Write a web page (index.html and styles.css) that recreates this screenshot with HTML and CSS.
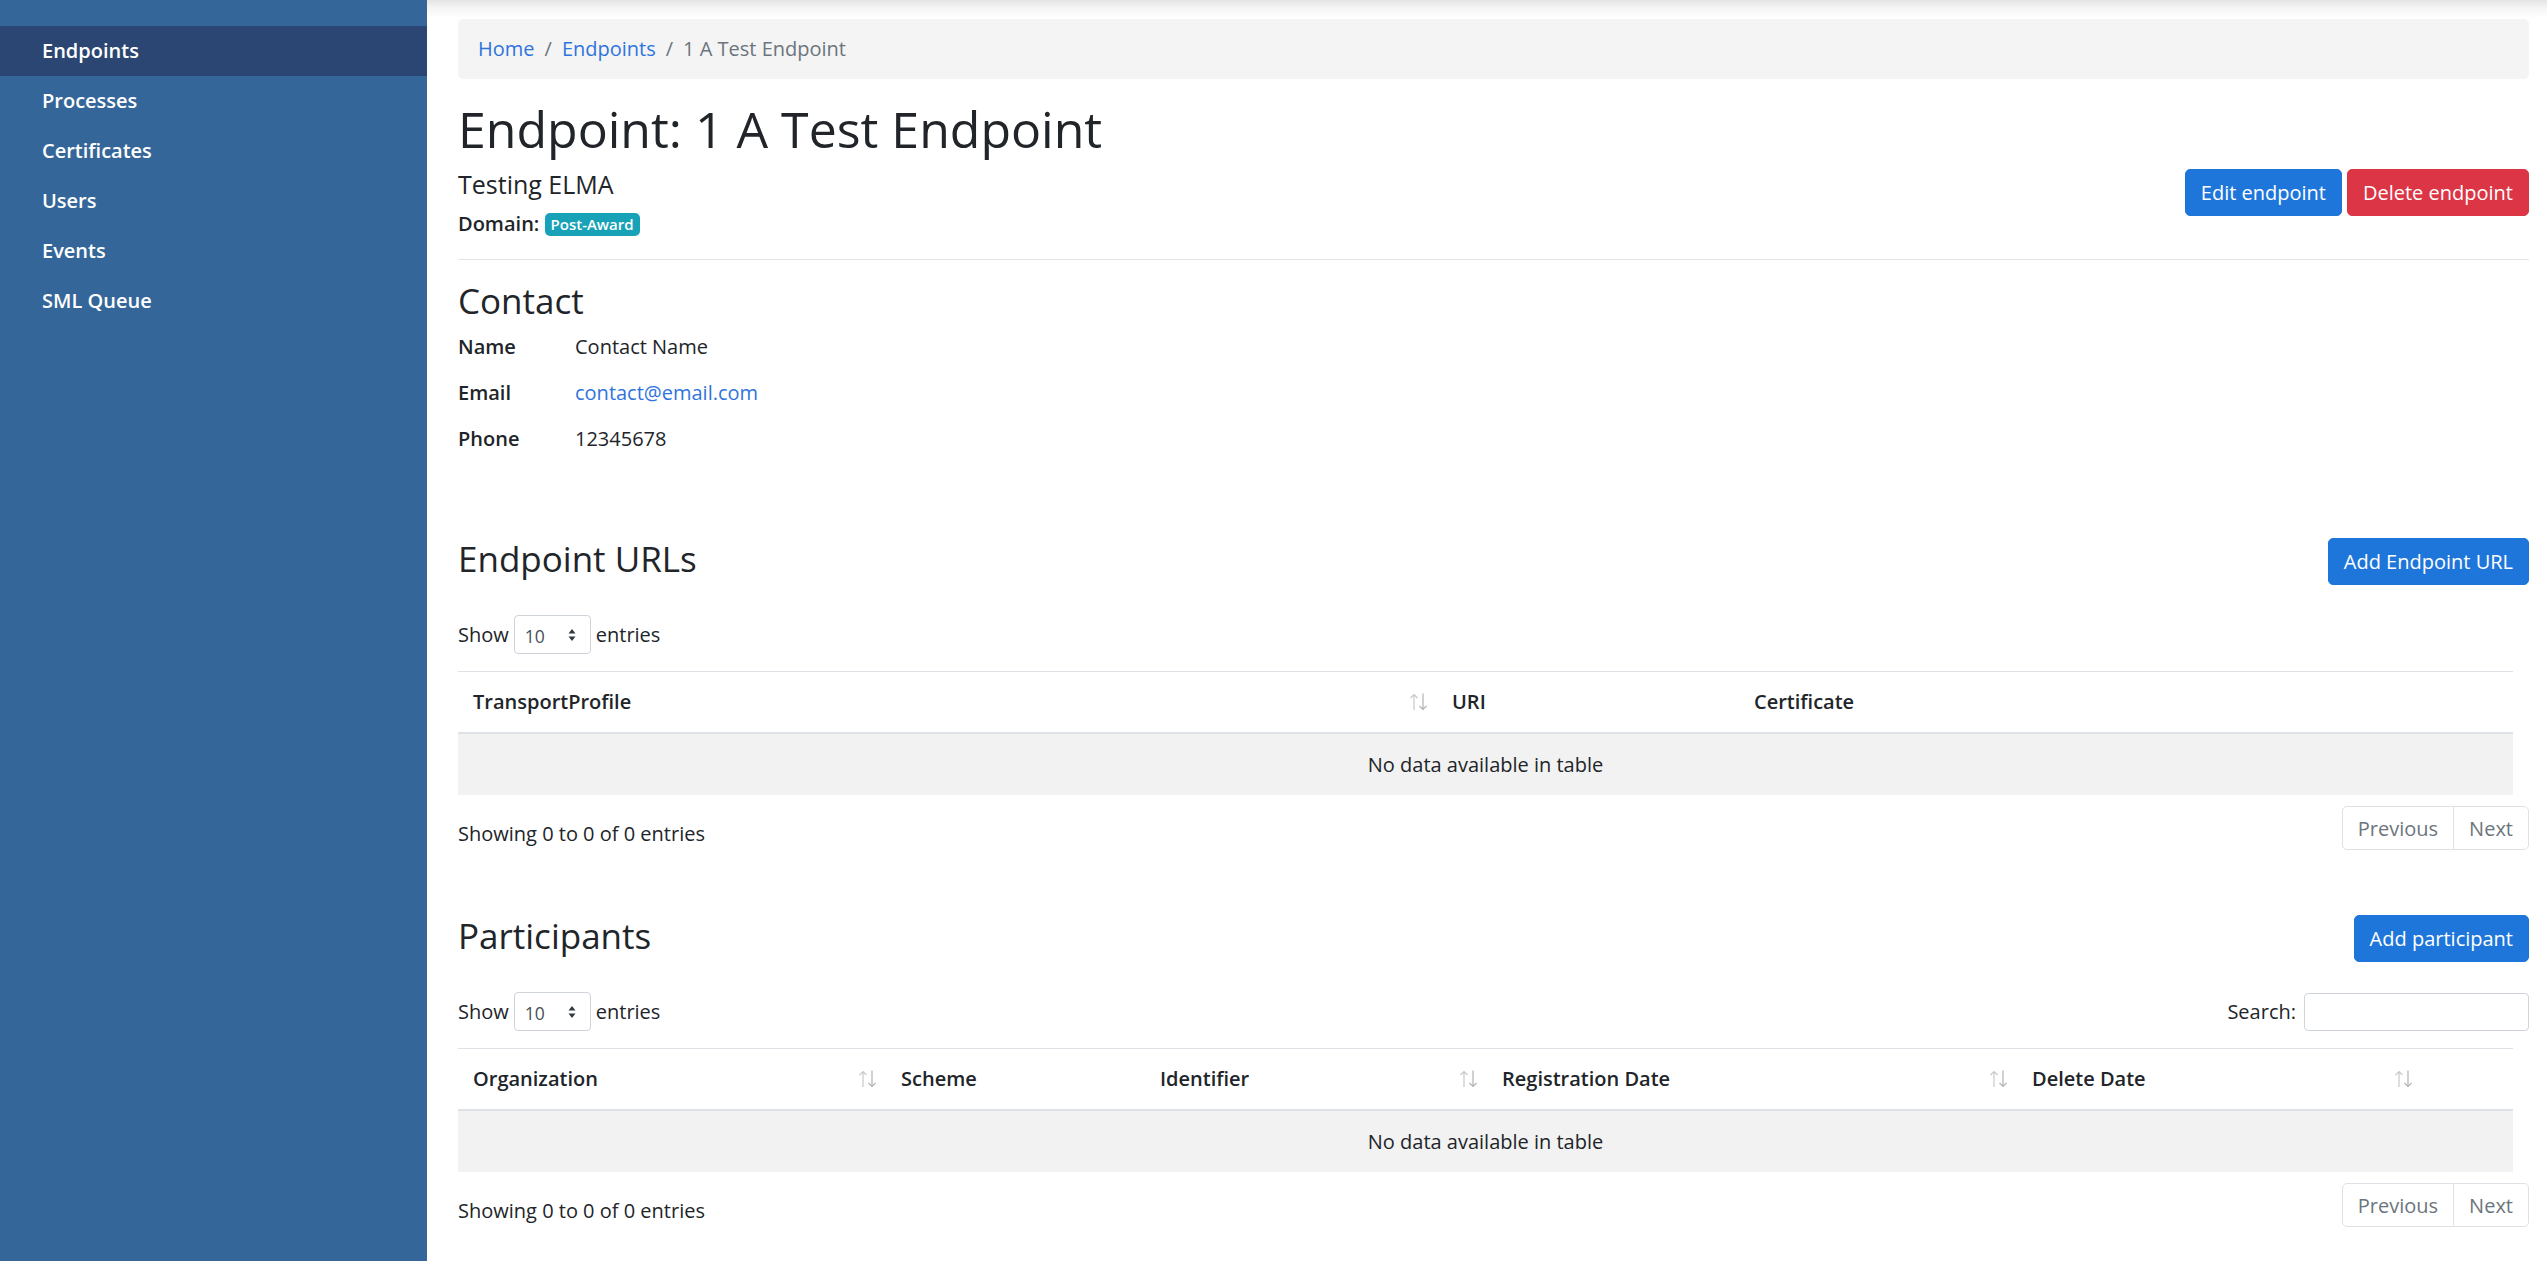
FILE: index.html
```html
<!DOCTYPE html>
<html lang="en">
<head>
<meta charset="utf-8">
<title>Endpoint: 1 A Test Endpoint</title>
<link rel="stylesheet" href="styles.css">
</head>
<body>
<div class="layout">
  <aside class="sidebar">
    <nav class="side-nav">
      <a class="side-link active" href="#">Endpoints</a>
      <a class="side-link" href="#">Processes</a>
      <a class="side-link" href="#">Certificates</a>
      <a class="side-link" href="#">Users</a>
      <a class="side-link" href="#">Events</a>
      <a class="side-link" href="#">SML Queue</a>
    </nav>
  </aside>
  <main class="main">
    <nav class="breadcrumb">
      <a href="#">Home</a><span class="sep">/</span><a href="#">Endpoints</a><span class="sep">/</span><span class="current">1 A Test Endpoint</span>
    </nav>

    <h1 class="page-title">Endpoint: 1 A Test Endpoint</h1>
    <div class="summary">
      <div class="summary-info">
        <h5 class="subtitle">Testing ELMA</h5>
        <div class="domain"><strong>Domain:</strong> <span class="badge">Post-Award</span></div>
      </div>
      <div class="actions">
        <button class="btn btn-primary" type="button">Edit endpoint</button>
        <button class="btn btn-danger" type="button">Delete endpoint</button>
      </div>
    </div>
    <hr class="divider">

    <section class="contact">
      <h3 class="section-title">Contact</h3>
      <div class="field"><span class="field-label">Name</span><span class="field-value">Contact Name</span></div>
      <div class="field"><span class="field-label">Email</span><a class="field-value" href="#">contact@email.com</a></div>
      <div class="field"><span class="field-label">Phone</span><span class="field-value">12345678</span></div>
    </section>

    <section class="panel">
      <div class="panel-head">
        <h3 class="section-title flush">Endpoint URLs</h3>
        <button class="btn btn-primary" type="button">Add Endpoint URL</button>
      </div>
      <div class="controls">
        <label class="length">Show
          <span class="select">10
            <svg class="select-arrows" viewBox="0 0 8 14" width="8" height="14"><path d="M4 1 L7.5 5.5 H0.5 Z M4 13 L7.5 8.5 H0.5 Z" fill="#343a40"/></svg>
          </span>
          entries</label>
      </div>
      <table class="dt">
        <thead>
          <tr>
            <th class="col-transport"><div class="th-in"><span>TransportProfile</span><svg class="sort" viewBox="0 0 20 18" width="20" height="18"><path d="M7 17 V1.5 M3.5 5 L7 1.5 L10.5 5" stroke="#c9c9c9" stroke-width="1.2" fill="none"/><path d="M16 0.5 V16.5 M12.5 13 L16 16.5 L19.5 13" stroke="#b3b3b3" stroke-width="1.2" fill="none"/></svg></div></th>
            <th class="col-uri"><div class="th-in"><span>URI</span></div></th>
            <th class="col-cert"><div class="th-in"><span>Certificate</span></div></th>
            <th class="col-act1"></th>
          </tr>
        </thead>
        <tbody>
          <tr><td class="empty" colspan="4">No data available in table</td></tr>
        </tbody>
      </table>
      <div class="table-foot">
        <div class="info">Showing 0 to 0 of 0 entries</div>
        <ul class="pagination">
          <li class="page-link">Previous</li>
          <li class="page-link">Next</li>
        </ul>
      </div>
    </section>

    <section class="panel">
      <div class="panel-head">
        <h3 class="section-title flush">Participants</h3>
        <button class="btn btn-primary" type="button">Add participant</button>
      </div>
      <div class="controls">
        <label class="length">Show
          <span class="select">10
            <svg class="select-arrows" viewBox="0 0 8 14" width="8" height="14"><path d="M4 1 L7.5 5.5 H0.5 Z M4 13 L7.5 8.5 H0.5 Z" fill="#343a40"/></svg>
          </span>
          entries</label>
        <label class="search">Search:<input class="search-input" type="search"></label>
      </div>
      <table class="dt">
        <thead>
          <tr>
            <th class="col-org"><div class="th-in"><span>Organization</span><svg class="sort" viewBox="0 0 20 18" width="20" height="18"><path d="M7 17 V1.5 M3.5 5 L7 1.5 L10.5 5" stroke="#c9c9c9" stroke-width="1.2" fill="none"/><path d="M16 0.5 V16.5 M12.5 13 L16 16.5 L19.5 13" stroke="#b3b3b3" stroke-width="1.2" fill="none"/></svg></div></th>
            <th class="col-scheme"><div class="th-in"><span>Scheme</span></div></th>
            <th class="col-ident"><div class="th-in"><span>Identifier</span><svg class="sort" viewBox="0 0 20 18" width="20" height="18"><path d="M7 17 V1.5 M3.5 5 L7 1.5 L10.5 5" stroke="#c9c9c9" stroke-width="1.2" fill="none"/><path d="M16 0.5 V16.5 M12.5 13 L16 16.5 L19.5 13" stroke="#b3b3b3" stroke-width="1.2" fill="none"/></svg></div></th>
            <th class="col-reg"><div class="th-in"><span>Registration Date</span><svg class="sort" viewBox="0 0 20 18" width="20" height="18"><path d="M7 17 V1.5 M3.5 5 L7 1.5 L10.5 5" stroke="#c9c9c9" stroke-width="1.2" fill="none"/><path d="M16 0.5 V16.5 M12.5 13 L16 16.5 L19.5 13" stroke="#b3b3b3" stroke-width="1.2" fill="none"/></svg></div></th>
            <th class="col-del"><div class="th-in"><span>Delete Date</span><svg class="sort" viewBox="0 0 20 18" width="20" height="18"><path d="M7 17 V1.5 M3.5 5 L7 1.5 L10.5 5" stroke="#c9c9c9" stroke-width="1.2" fill="none"/><path d="M16 0.5 V16.5 M12.5 13 L16 16.5 L19.5 13" stroke="#b3b3b3" stroke-width="1.2" fill="none"/></svg></div></th>
            <th class="col-act2"></th>
          </tr>
        </thead>
        <tbody>
          <tr><td class="empty" colspan="6">No data available in table</td></tr>
        </tbody>
      </table>
      <div class="table-foot">
        <div class="info">Showing 0 to 0 of 0 entries</div>
        <ul class="pagination">
          <li class="page-link">Previous</li>
          <li class="page-link">Next</li>
        </ul>
      </div>
    </section>
  </main>
</div>
</body>
</html>
```

FILE: styles.css
```css
* { box-sizing: border-box; }

html, body {
  margin: 0;
  height: 100%;
  overflow: hidden;
}

body {
  font-family: "Open Sans", "Liberation Sans", sans-serif;
  font-size: 20px;
  line-height: 1.5;
  color: #212529;
  background: #fff;
}

a { color: #2f74dc; text-decoration: none; }

.layout {
  display: flex;
  height: 100vh;
}

/* Sidebar */
.sidebar {
  width: 427px;
  flex: 0 0 427px;
  background: #346699;
}

.side-nav {
  display: flex;
  flex-direction: column;
  padding-top: 26px;
}

.side-link {
  display: block;
  padding: 10px 42px;
  line-height: 30px;
  color: #fff;
  font-weight: 600;
  font-size: 20px;
}

.side-link.active { background: #2b4673; }

/* Main */
.main {
  flex: 1;
  min-width: 0;
  padding: 19px 18px 0 31px;
  background: linear-gradient(to bottom, #e4e4e4 0, #f5f5f5 8px, #fff 18px) no-repeat;
}

.breadcrumb {
  display: flex;
  align-items: center;
  background: #f4f4f4;
  border-radius: 5px;
  padding: 15px 20px;
  line-height: 30px;
  margin-bottom: 20px;
}

.breadcrumb .sep {
  color: #6c757d;
  padding: 0 10px;
}

.breadcrumb .current { color: #6c757d; }

.page-title {
  font-size: 50px;
  font-weight: 400;
  line-height: 1.2;
  margin: 0 0 10px;
}

.summary {
  display: flex;
  justify-content: space-between;
  align-items: flex-start;
}

.subtitle {
  font-size: 25px;
  font-weight: 400;
  line-height: 1.2;
  margin: 0 0 10px;
}

.domain { line-height: 30px; }
.domain strong { font-weight: 600; }

.badge {
  display: inline-block;
  background: #17a2b8;
  color: #fff;
  font-size: 15px;
  font-weight: 600;
  line-height: 1;
  padding: 3.75px 6px;
  border-radius: 5px;
  vertical-align: 1px;
}

.actions {
  display: flex;
  gap: 5px;
}

.btn {
  font-family: inherit;
  font-size: 20px;
  line-height: 1.5;
  padding: 7.5px 15px;
  border: 1px solid transparent;
  border-radius: 5px;
  color: #fff;
  cursor: pointer;
}

.btn-primary { background: #1e76db; border-color: #1e76db; }
.btn-danger { background: #dc3545; border-color: #dc3545; }

.divider {
  border: 0;
  border-top: 1px solid rgba(0, 0, 0, 0.1);
  margin: 20px 0;
}

.section-title {
  font-size: 35px;
  font-weight: 400;
  line-height: 1.2;
  margin: 0 0 10px;
}

.section-title.flush { margin: 0; }

.contact { margin-bottom: 84px; }

.field {
  display: flex;
  line-height: 30px;
  margin-bottom: 16px;
}

.field:last-child { margin-bottom: 0; }

.field-label {
  width: 117px;
  font-weight: 600;
}

/* Panels with tables */
.panel { margin-bottom: 65px; }

.panel-head {
  display: flex;
  justify-content: space-between;
  align-items: flex-start;
}

.controls {
  display: flex;
  justify-content: space-between;
  align-items: center;
  margin-top: 30px;
  height: 39px;
  margin-bottom: 17px;
}

.length {
  display: flex;
  align-items: center;
  gap: 5px;
}

.select {
  display: inline-flex;
  align-items: center;
  justify-content: space-between;
  width: 77px;
  height: 39px;
  padding: 3px 14px 0 10px;
  border: 1px solid #ced4da;
  border-radius: 4px;
  font-size: 17.5px;
  color: #495057;
}

.select-arrows { margin-top: -3px; }

.search {
  display: flex;
  align-items: center;
  gap: 8px;
}

.search-input {
  width: 225px;
  height: 38px;
  border: 1px solid #ced4da;
  border-radius: 4px;
  font-family: inherit;
  font-size: 17.5px;
  padding: 4px 10px;
}

.dt {
  width: calc(100% - 16px);
  border-collapse: separate;
  border-spacing: 0;
  table-layout: fixed;
}

.dt th {
  padding: 15px 10px 15px 15px;
  border-top: 1px solid #dee2e6;
  border-bottom: 2px solid #dee2e6;
  text-align: left;
  font-weight: 600;
  line-height: 30px;
  vertical-align: bottom;
}

.th-in {
  display: flex;
  justify-content: space-between;
  align-items: center;
}

.sort { flex: 0 0 auto; }

.dt td.empty {
  padding: 15px;
  line-height: 30px;
  text-align: center;
  background: #f2f2f2;
  border-top: 1px solid #f2f2f2;
}

.col-transport { width: 979px; }
.col-uri { width: 302px; }
.col-cert { width: 601px; }
.col-act1 { width: 173px; }

.col-org { width: 428px; }
.col-scheme { width: 259px; }
.col-ident { width: 342px; }
.col-reg { width: 530px; }
.col-del { width: 405px; }
.col-act2 { width: 91px; }

.table-foot {
  display: flex;
  justify-content: space-between;
  align-items: flex-start;
  margin-top: 11px;
}

.info {
  padding-top: 13px;
  line-height: 30px;
}

.pagination {
  display: flex;
  list-style: none;
  margin: 0;
  padding: 0;
}

.page-link {
  padding: 8.5px 15px;
  line-height: 1.25;
  color: #6c757d;
  border: 1px solid #dee2e6;
  background: #fff;
}

.page-link + .page-link { margin-left: -1px; }
.page-link:first-child { border-radius: 5px 0 0 5px; }
.page-link:last-child { border-radius: 0 5px 5px 0; }
```
